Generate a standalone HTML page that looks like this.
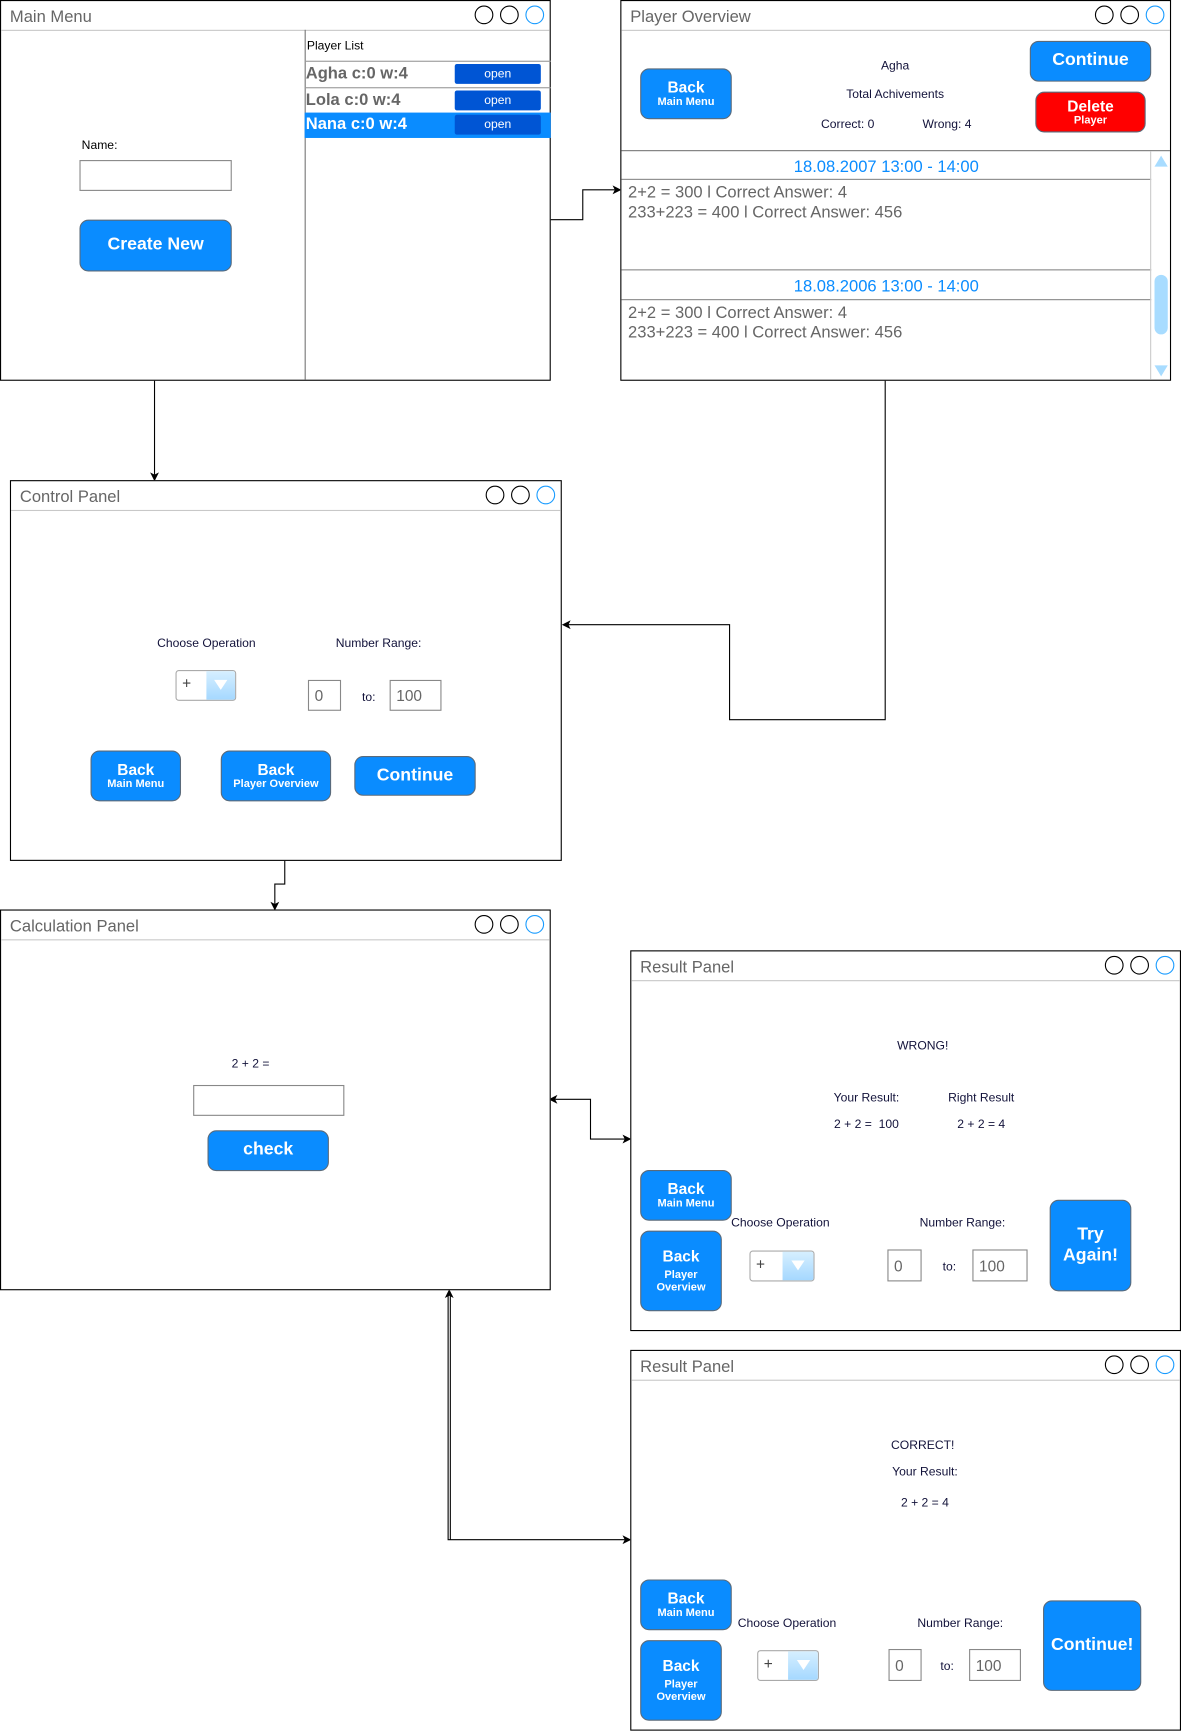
<!DOCTYPE html>
<html><head><meta charset="utf-8"><style>
html,body{margin:0;padding:0;background:#fff;width:1181px;height:1731px;overflow:hidden}
#s{position:absolute;left:0;top:0;width:1070px;height:1568px;transform:scale(1.10374);transform-origin:0 0;font-family:"Liberation Sans",Arial,sans-serif}
.a{position:absolute}
.win{position:absolute;border:1px solid #000;background:#fff;box-sizing:border-box}
.tb{position:absolute;left:0;right:0;top:0;height:26px;border-bottom:1px solid #c8c8c8}
.tt{position:absolute;left:8px;top:6px;font-size:15px;color:#666}
.c{position:absolute;top:4px;width:17px;height:17px;border:1.2px solid #000;border-radius:50%;box-sizing:border-box}
.c.b{border-color:#1a9cff}
.btn{position:absolute;background:#0a8cff;border:1px solid #5a6a7a;border-radius:8px;color:#fff;font-weight:bold;text-align:center;box-sizing:border-box;display:flex;flex-direction:column;justify-content:center;align-items:center;line-height:1.15}
.lb{position:absolute;font-size:11px;color:#12123a;white-space:nowrap;transform:translateX(-50%)}
.inp{position:absolute;border:1px solid #888;background:#fff;box-sizing:border-box;font-size:14px;color:#666;padding-left:5px;display:flex;align-items:center}
.dd{position:absolute;border:1px solid #aaa;border-radius:3px;box-sizing:border-box;background:#fff;overflow:hidden}
.dd .p{position:absolute;left:5px;top:3px;font-size:14px;color:#444}
.dd .r{position:absolute;right:0;top:0;bottom:0;width:50%;background:linear-gradient(#d6efff,#a5d8ff)}
.dd .r:after{content:"";position:absolute;left:50%;top:8px;margin-left:-6px;border-left:6px solid transparent;border-right:6px solid transparent;border-top:9px solid #fff}
.row{position:absolute;left:0;right:0;height:23px;border-top:1px solid #999;font-weight:bold;font-size:15px;color:#666;box-sizing:border-box;padding:2px 0 0 1px}
.op{position:absolute;left:136px;top:2px;width:78px;height:18px;background:#0055d4;border-radius:2px;color:#fff;font-size:11px;font-weight:normal;text-align:center;line-height:18px}
.gt{position:absolute;left:6px;font-size:15px;color:#666;white-space:nowrap}
.dh{position:absolute;left:0;width:480px;text-align:center;font-size:15px;color:#0a8cff}
</style></head><body><div id="s">

<svg class="a" style="left:0;top:0" width="1070" height="1568">
<g fill="none" stroke="#000" stroke-width="1">
<path d="M140 245 V430"/>
<path d="M498 199 H528 V172 H557"/>
<path d="M802 344 V652 H661 V566 H515"/>
<path d="M258 779 V801 H249 V819"/>
<path d="M503 996 H535 V1032 H566"/>
<path d="M406 1173 V1395 H566"/>
<path d="M408 1173 V1395"/>
</g>
<g fill="#000">
<path d="M136 428 L140 436 L144 428 L140 430Z"/>
<path d="M555 168 L563 172 L555 176 L557 172Z"/>
<path d="M517 562 L509 566 L517 570 L515 566Z"/>
<path d="M245 817 L249 825 L253 817 L249 819Z"/>
<path d="M505 992 L497 996 L505 1000 L503 996Z"/>
<path d="M564 1028 L572 1032 L564 1036 L566 1032Z"/>
<path d="M403 1176 L407 1168 L411 1176 L407 1174Z"/>
<path d="M564 1391 L572 1395 L564 1399 L566 1395Z"/>
</g>
</svg>

<!-- Main Menu -->
<div class="win" style="left:0;top:0;width:499px;height:345px">
<div class="tb"><div class="tt">Main Menu</div><div class="c" style="left:429px"></div><div class="c" style="left:452px"></div><div class="c b" style="left:475px"></div></div>
<div class="a" style="left:275px;top:26px;bottom:0;border-left:1px solid #777"></div>
<div class="a" style="left:277px;top:35px;font-size:11px;color:#000">Player List</div>
<div class="a" style="left:275px;top:54px;width:223px;height:72px">
<div class="row" style="top:0">Agha c:0 w:4<div class="op">open</div></div>
<div class="row" style="top:24px">Lola c:0 w:4<div class="op">open</div></div>
<div class="row" style="top:47px;background:#0a8cff;color:#fff;border-top:none">Nana c:0 w:4<div class="op">open</div></div>
</div>
<div class="a" style="left:73px;top:125px;font-size:11px">Name:</div>
<div class="inp" style="left:71px;top:144px;width:138px;height:28px"></div>
<div class="btn" style="left:71px;top:198px;width:138px;height:47px;font-size:16px">Create New</div>
</div>

<!-- Player Overview -->
<div class="win" style="left:562px;top:0;width:499px;height:345px">
<div class="tb"><div class="tt">Player Overview</div><div class="c" style="left:429px"></div><div class="c" style="left:452px"></div><div class="c b" style="left:475px"></div></div>
<div class="btn" style="left:17px;top:61px;width:83px;height:46px;font-size:14px">Back<span style="font-size:10px">Main Menu</span></div>
<div class="lb" style="left:248px;top:53px">Agha</div>
<div class="lb" style="left:248px;top:79px">Total Achivements</div>
<div class="lb" style="left:205px;top:106px">Correct: 0</div>
<div class="lb" style="left:295px;top:106px">Wrong: 4</div>
<div class="btn" style="left:370px;top:36px;width:110px;height:37px;font-size:16px">Continue</div>
<div class="btn" style="left:375px;top:82px;width:100px;height:37px;font-size:14px;background:#f00">Delete<span style="font-size:10px">Player</span></div>
<div class="a" style="left:0;right:0;top:135px;border-top:1px solid #777"></div>
<div class="a" style="left:0;width:480px;top:161px;border-top:1px solid #888"></div>
<div class="a" style="left:0;width:480px;top:243px;border-top:1px solid #888"></div>
<div class="a" style="left:0;width:480px;top:270px;border-top:1px solid #888"></div>
<div class="a" style="left:479px;top:136px;bottom:0;border-left:1px solid #ccc"></div>
<div class="dh" style="top:142px">18.08.2007 13:00 - 14:00</div>
<div class="gt" style="top:165px">2+2 = 300 l Correct Answer: 4</div>
<div class="gt" style="top:183px">233+223 = 400 l Correct Answer: 456</div>
<div class="dh" style="top:250px">18.08.2006 13:00 - 14:00</div>
<div class="gt" style="top:274px">2+2 = 300 l Correct Answer: 4</div>
<div class="gt" style="top:292px">233+223 = 400 l Correct Answer: 456</div>
<div class="a" style="left:483px;top:140px;border-left:6px solid transparent;border-right:6px solid transparent;border-bottom:10px solid #a8dcff"></div>
<div class="a" style="left:483px;top:330px;border-left:6px solid transparent;border-right:6px solid transparent;border-top:10px solid #a8dcff"></div>
<div class="a" style="left:483px;top:248px;width:12px;height:54px;border-radius:6px;background:#a8dcff"></div>
</div>

<!-- Control Panel -->
<div class="win" style="left:9px;top:435px;width:500px;height:345px">
<div class="tb"><div class="tt">Control Panel</div><div class="c" style="left:430px"></div><div class="c" style="left:453px"></div><div class="c b" style="left:476px"></div></div>
<div class="lb" style="left:177px;top:141px">Choose Operation</div>
<div class="lb" style="left:333px;top:141px">Number Range:</div>
<div class="dd" style="left:149px;top:171px;width:55px;height:28px"><div class="p">+</div><div class="r"></div></div>
<div class="inp" style="left:269px;top:180px;width:30px;height:28px">0</div>
<div class="a" style="left:318px;top:190px;font-size:11px;color:#12123a">to:</div>
<div class="inp" style="left:343px;top:180px;width:47px;height:28px">100</div>
<div class="btn" style="left:72px;top:244px;width:82px;height:46px;font-size:14px">Back<span style="font-size:10px">Main Menu</span></div>
<div class="btn" style="left:190px;top:244px;width:100px;height:46px;font-size:14px">Back<span style="font-size:10px">Player Overview</span></div>
<div class="btn" style="left:311px;top:249px;width:110px;height:36px;font-size:16px">Continue</div>
</div>

<!-- Calculation Panel -->
<div class="win" style="left:0;top:824px;width:499px;height:345px">
<div class="tb"><div class="tt">Calculation Panel</div><div class="c" style="left:429px"></div><div class="c" style="left:452px"></div><div class="c b" style="left:475px"></div></div>
<div class="lb" style="left:226px;top:133px">2 + 2 =</div>
<div class="inp" style="left:174px;top:158px;width:137px;height:28px"></div>
<div class="btn" style="left:187px;top:199px;width:110px;height:37px;font-size:16px">check</div>
</div>

<!-- Result Panel 1 -->
<div class="win" style="left:571px;top:861px;width:499px;height:345px">
<div class="tb"><div class="tt">Result Panel</div><div class="c" style="left:429px"></div><div class="c" style="left:452px"></div><div class="c b" style="left:475px"></div></div>
<div class="lb" style="left:264px;top:80px">WRONG!</div>
<div class="lb" style="left:213px;top:127px">Your Result:</div>
<div class="lb" style="left:317px;top:127px">Right Result</div>
<div class="lb" style="left:213px;top:151px">2 + 2 =&nbsp; 100</div>
<div class="lb" style="left:317px;top:151px">2 + 2 = 4</div>
<div class="btn" style="left:8px;top:198px;width:83px;height:46px;font-size:14px">Back<span style="font-size:10px">Main Menu</span></div>
<div class="btn" style="left:8px;top:253px;width:74px;height:73px;font-size:14px">Back<span style="font-size:10px;margin-top:3px">Player<br>Overview</span></div>
<div class="lb" style="left:135px;top:240px">Choose Operation</div>
<div class="lb" style="left:300px;top:240px">Number Range:</div>
<div class="dd" style="left:107px;top:271px;width:59px;height:28px"><div class="p">+</div><div class="r"></div></div>
<div class="inp" style="left:232px;top:270px;width:31px;height:29px">0</div>
<div class="a" style="left:282px;top:280px;font-size:11px;color:#12123a">to:</div>
<div class="inp" style="left:309px;top:270px;width:50px;height:29px">100</div>
<div class="btn" style="left:379px;top:225px;width:74px;height:83px;font-size:16px">Try<br>Again!</div>
</div>

<!-- Result Panel 2 -->
<div class="win" style="left:571px;top:1223px;width:499px;height:345px">
<div class="tb"><div class="tt">Result Panel</div><div class="c" style="left:429px"></div><div class="c" style="left:452px"></div><div class="c b" style="left:475px"></div></div>
<div class="lb" style="left:264px;top:80px">CORRECT!</div>
<div class="lb" style="left:266px;top:104px">Your Result:</div>
<div class="lb" style="left:266px;top:132px">2 + 2 = 4</div>
<div class="btn" style="left:8px;top:207px;width:83px;height:46px;font-size:14px">Back<span style="font-size:10px">Main Menu</span></div>
<div class="btn" style="left:8px;top:262px;width:74px;height:73px;font-size:14px">Back<span style="font-size:10px;margin-top:3px">Player<br>Overview</span></div>
<div class="lb" style="left:141px;top:241px">Choose Operation</div>
<div class="lb" style="left:298px;top:241px">Number Range:</div>
<div class="dd" style="left:114px;top:271px;width:56px;height:28px"><div class="p">+</div><div class="r"></div></div>
<div class="inp" style="left:233px;top:270px;width:30px;height:29px">0</div>
<div class="a" style="left:280px;top:280px;font-size:11px;color:#12123a">to:</div>
<div class="inp" style="left:306px;top:270px;width:47px;height:29px">100</div>
<div class="btn" style="left:373px;top:226px;width:89px;height:82px;font-size:16px">Continue!</div>
</div>

</div></body></html>
